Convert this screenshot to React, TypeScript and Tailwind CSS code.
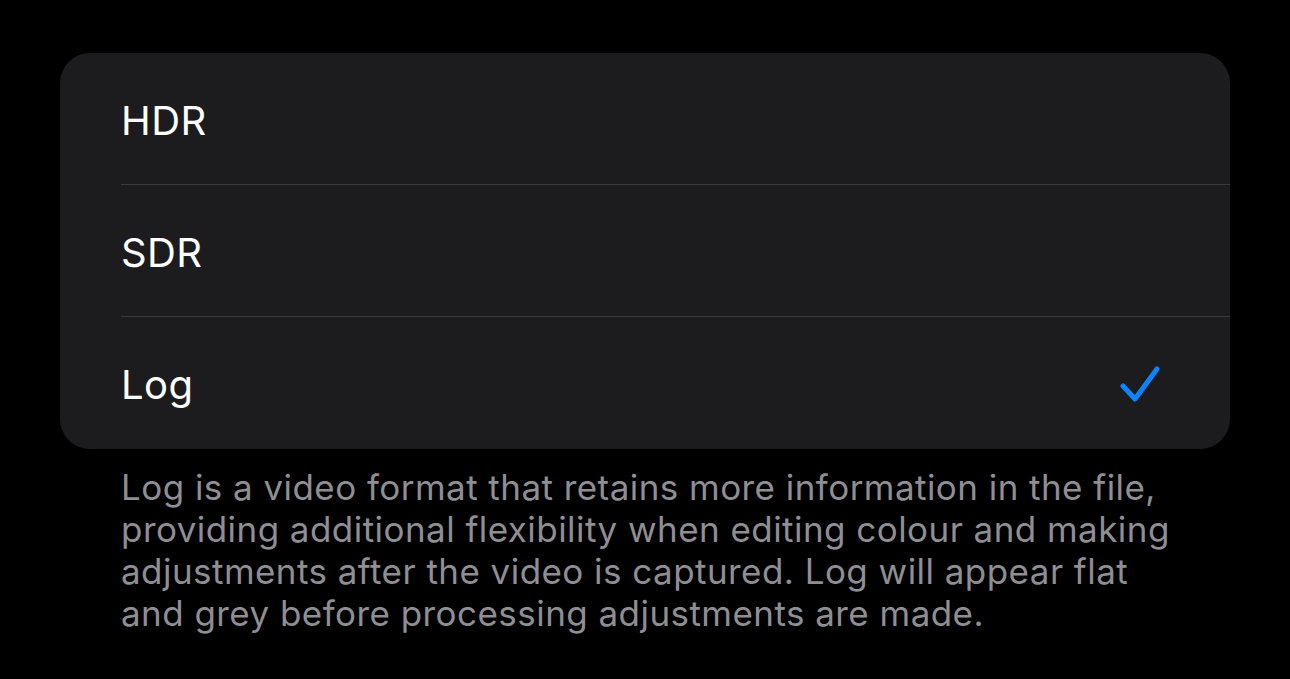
const options = ["HDR", "SDR", "Log"];

function Check() {
  return (
    <svg width="40" height="38" viewBox="0 0 40 38" fill="none">
      <path
        d="M3 20 L15 33 L37 3"
        stroke="#0a84ff"
        strokeWidth="5"
        strokeLinecap="round"
        strokeLinejoin="round"
      />
    </svg>
  );
}

export default function App() {
  const selected = "Log";
  return (
    <div
      className="w-[1290px] h-[679px] bg-black pt-[53px] px-[60px] overflow-hidden"
      style={{ fontFamily: "Inter, 'Noto Sans', sans-serif" }}
    >
      <div className="bg-[#1c1c1e] rounded-[30px] w-[1170px] overflow-hidden">
        {options.map((opt, i) => (
          <div key={opt} className="pl-[61px]">
            <div
              className={
                "h-[132px] flex items-center justify-between pr-[70px] pt-[4px] " +
                (i < options.length - 1 ? "border-b border-[#3a3a3c]" : "")
              }
            >
              <span className="text-[40px] text-white tracking-[0.4px]">{opt}</span>
              {opt === selected && <Check />}
            </div>
          </div>
        ))}
      </div>
      <p className="mt-[17px] pl-[61px] text-[35px] leading-[42px] text-[#8e8e93] tracking-[0.45px] whitespace-nowrap">
        Log is a video format that retains more information in the file,
        <br />
        providing additional flexibility when editing colour and making
        <br />
        adjustments after the video is captured. Log will appear flat
        <br />
        and grey before processing adjustments are made.
      </p>
    </div>
  );
}
